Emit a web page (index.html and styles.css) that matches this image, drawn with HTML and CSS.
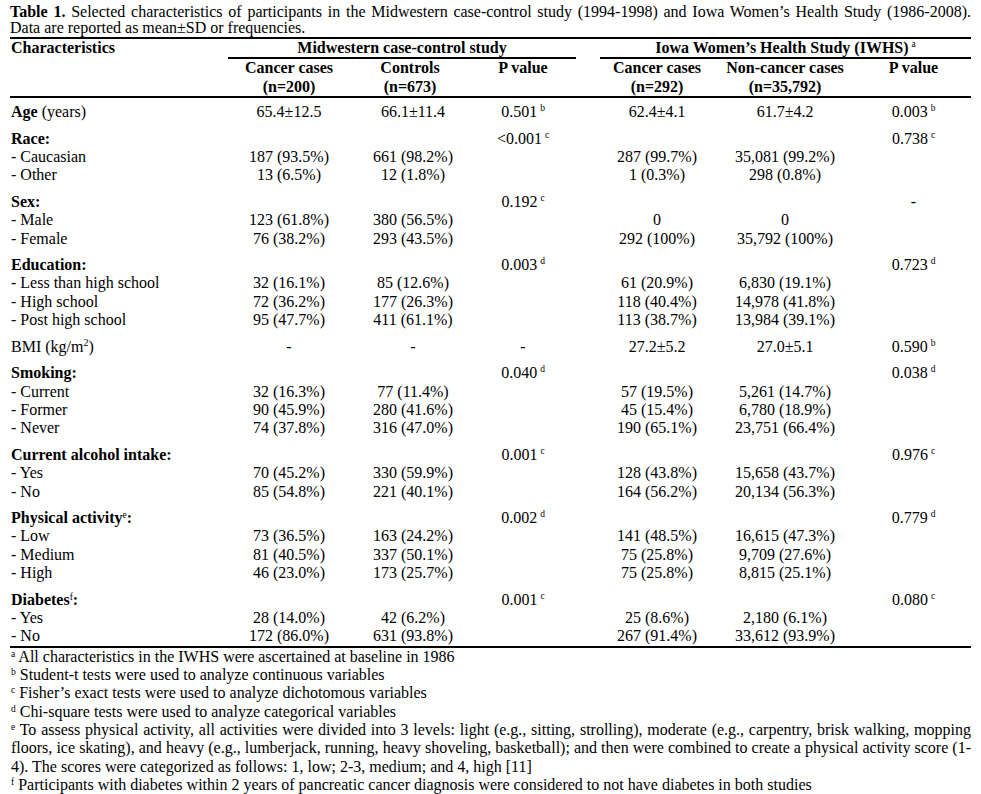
FILE: index.html
```html
<!DOCTYPE html>
<html>
<head>
<meta charset="utf-8">
<link rel="stylesheet" href="styles.css">
</head>
<body>
<div class="page">
  <p class="caption"><b>Table 1.</b> Selected characteristics of participants in the Midwestern case-control study (1994-1998) and Iowa Women’s Health Study (1986-2008). Data are reported as mean±SD or frequencies.</p>
  <table class="data">
    <colgroup>
      <col class="c-label"><col class="c-mw1"><col class="c-mw2"><col class="c-mw3"><col class="c-gap"><col class="c-iw1"><col class="c-iw2"><col class="c-iw3">
    </colgroup>
    <thead>
      <tr>
        <th class="lbl" rowspan="2">Characteristics</th>
        <th class="grp" colspan="3">Midwestern case-control study</th>
        <th></th>
        <th class="grp" colspan="3">Iowa Women’s Health Study (IWHS)<sup class="ref">a</sup></th>
      </tr>
      <tr>
        <th>Cancer cases<br>(n=200)</th>
        <th>Controls<br>(n=673)</th>
        <th class="pv">P value</th>
        <th></th>
        <th>Cancer cases<br>(n=292)</th>
        <th>Non-cancer cases<br>(n=35,792)</th>
        <th class="pv">P value</th>
      </tr>
    </thead>
    <tbody>
      <tr class="first"><td class="lbl"><b>Age</b> (years)</td><td>65.4±12.5</td><td class="r">66.1±11.4</td><td>0.501<sup class="ref">b</sup></td><td></td><td>62.4±4.1</td><td>61.7±4.2</td><td>0.003<sup class="ref">b</sup></td></tr>

      <tr class="gs"><td class="lbl"><b>Race:</b></td><td></td><td></td><td>&lt;0.001<sup class="ref">c</sup></td><td></td><td></td><td></td><td>0.738<sup class="ref">c</sup></td></tr>
      <tr><td class="lbl">- Caucasian</td><td>187 (93.5%)</td><td class="r">661 (98.2%)</td><td></td><td></td><td>287 (99.7%)</td><td>35,081 (99.2%)</td><td></td></tr>
      <tr><td class="lbl">- Other</td><td>13 (6.5%)</td><td class="r">12 (1.8%)</td><td></td><td></td><td>1 (0.3%)</td><td>298 (0.8%)</td><td></td></tr>

      <tr class="gs"><td class="lbl"><b>Sex:</b></td><td></td><td></td><td>0.192<sup class="ref">c</sup></td><td></td><td></td><td></td><td>-</td></tr>
      <tr><td class="lbl">- Male</td><td>123 (61.8%)</td><td class="r">380 (56.5%)</td><td></td><td></td><td>0</td><td>0</td><td></td></tr>
      <tr><td class="lbl">- Female</td><td>76 (38.2%)</td><td class="r">293 (43.5%)</td><td></td><td></td><td>292 (100%)</td><td>35,792 (100%)</td><td></td></tr>

      <tr class="gs"><td class="lbl"><b>Education:</b></td><td></td><td></td><td>0.003<sup class="ref">d</sup></td><td></td><td></td><td></td><td>0.723<sup class="ref">d</sup></td></tr>
      <tr><td class="lbl">- Less than high school</td><td>32 (16.1%)</td><td class="r">85 (12.6%)</td><td></td><td></td><td>61 (20.9%)</td><td>6,830 (19.1%)</td><td></td></tr>
      <tr><td class="lbl">- High school</td><td>72 (36.2%)</td><td class="r">177 (26.3%)</td><td></td><td></td><td>118 (40.4%)</td><td>14,978 (41.8%)</td><td></td></tr>
      <tr><td class="lbl">- Post high school</td><td>95 (47.7%)</td><td class="r">411 (61.1%)</td><td></td><td></td><td>113 (38.7%)</td><td>13,984 (39.1%)</td><td></td></tr>

      <tr class="gs"><td class="lbl">BMI (kg/m<sup class="pow">2</sup>)</td><td>-</td><td class="r">-</td><td>-</td><td></td><td>27.2±5.2</td><td>27.0±5.1</td><td>0.590<sup class="ref">b</sup></td></tr>

      <tr class="gs"><td class="lbl"><b>Smoking:</b></td><td></td><td></td><td>0.040<sup class="ref">d</sup></td><td></td><td></td><td></td><td>0.038<sup class="ref">d</sup></td></tr>
      <tr><td class="lbl">- Current</td><td>32 (16.3%)</td><td class="r">77 (11.4%)</td><td></td><td></td><td>57 (19.5%)</td><td>5,261 (14.7%)</td><td></td></tr>
      <tr><td class="lbl">- Former</td><td>90 (45.9%)</td><td class="r">280 (41.6%)</td><td></td><td></td><td>45 (15.4%)</td><td>6,780 (18.9%)</td><td></td></tr>
      <tr><td class="lbl">- Never</td><td>74 (37.8%)</td><td class="r">316 (47.0%)</td><td></td><td></td><td>190 (65.1%)</td><td>23,751 (66.4%)</td><td></td></tr>

      <tr class="gs"><td class="lbl"><b>Current alcohol intake:</b></td><td></td><td></td><td>0.001<sup class="ref">c</sup></td><td></td><td></td><td></td><td>0.976<sup class="ref">c</sup></td></tr>
      <tr><td class="lbl">- Yes</td><td>70 (45.2%)</td><td class="r">330 (59.9%)</td><td></td><td></td><td>128 (43.8%)</td><td>15,658 (43.7%)</td><td></td></tr>
      <tr><td class="lbl">- No</td><td>85 (54.8%)</td><td class="r">221 (40.1%)</td><td></td><td></td><td>164 (56.2%)</td><td>20,134 (56.3%)</td><td></td></tr>

      <tr class="gs"><td class="lbl"><b>Physical activity</b><sup class="fn">e</sup><b>:</b></td><td></td><td></td><td>0.002<sup class="ref">d</sup></td><td></td><td></td><td></td><td>0.779<sup class="ref">d</sup></td></tr>
      <tr><td class="lbl">- Low</td><td>73 (36.5%)</td><td class="r">163 (24.2%)</td><td></td><td></td><td>141 (48.5%)</td><td>16,615 (47.3%)</td><td></td></tr>
      <tr><td class="lbl">- Medium</td><td>81 (40.5%)</td><td class="r">337 (50.1%)</td><td></td><td></td><td>75 (25.8%)</td><td>9,709 (27.6%)</td><td></td></tr>
      <tr><td class="lbl">- High</td><td>46 (23.0%)</td><td class="r">173 (25.7%)</td><td></td><td></td><td>75 (25.8%)</td><td>8,815 (25.1%)</td><td></td></tr>

      <tr class="gs"><td class="lbl"><b>Diabetes</b><sup class="fn">f</sup><b>:</b></td><td></td><td></td><td>0.001<sup class="ref">c</sup></td><td></td><td></td><td></td><td>0.080<sup class="ref">c</sup></td></tr>
      <tr><td class="lbl">- Yes</td><td>28 (14.0%)</td><td class="r">42 (6.2%)</td><td></td><td></td><td>25 (8.6%)</td><td>2,180 (6.1%)</td><td></td></tr>
      <tr><td class="lbl">- No</td><td>172 (86.0%)</td><td class="r">631 (93.8%)</td><td></td><td></td><td>267 (91.4%)</td><td>33,612 (93.9%)</td><td></td></tr>
    </tbody>
  </table>
  <div class="notes">
    <p><sup class="fn">a</sup> All characteristics in the IWHS were ascertained at baseline in 1986</p>
    <p><sup class="fn">b</sup> Student-t tests were used to analyze continuous variables</p>
    <p><sup class="fn">c</sup> Fisher’s exact tests were used to analyze dichotomous variables</p>
    <p><sup class="fn">d</sup> Chi-square tests were used to analyze categorical variables</p>
    <p><sup class="fn">e</sup> To assess physical activity, all activities were divided into 3 levels: light (e.g., sitting, strolling), moderate (e.g., carpentry, brisk walking, mopping floors, ice skating), and heavy (e.g., lumberjack, running, heavy shoveling, basketball); and then were combined to create a physical activity score (1-4). The scores were categorized as follows: 1, low; 2-3, medium; and 4, high [11]</p>
    <p><sup class="fn">f</sup> Participants with diabetes within 2 years of pancreatic cancer diagnosis were considered to not have diabetes in both studies</p>
  </div>
</div>
</body>
</html>
```

FILE: styles.css
```css
html, body {
  margin: 0;
  padding: 0;
  background: #fff;
}

body {
  font-family: "Liberation Serif", "Times New Roman", serif;
  font-size: 16px;
  color: #000;
}

.page {
  width: 961px;
  padding: 4px 10px 0 10px;
}

.caption {
  margin: 0;
  line-height: 16px;
  text-align: justify;
  padding-bottom: 1px;
}

.data {
  width: 961px;
  table-layout: fixed;
  border-collapse: collapse;
  border-top: 2px solid #000;
  border-bottom: 2px solid #000;
  line-height: 18.4px;
}

.c-label { width: 218px; }
.c-mw1 { width: 122px; }
.c-mw2 { width: 120px; }
.c-mw3 { width: 106px; }
.c-gap { width: 24px; }
.c-iw1 { width: 114px; }
.c-iw2 { width: 142px; }
.c-iw3 { width: 115px; }

.data th,
.data td {
  padding: 0;
  text-align: center;
  vertical-align: top;
  white-space: nowrap;
}

.data th {
  font-weight: bold;
}

.data th.lbl,
.data td.lbl {
  text-align: left;
  padding-left: 1px;
}

.data th.grp {
  border-bottom: 2px solid #000;
}

.data thead {
  border-bottom: 2px solid #000;
}

.data td.r {
  padding-left: 6px;
}

.data tr.first td {
  padding-top: 5px;
}

.data tr.gs td {
  padding-top: 8px;
}

sup.ref {
  font-size: 9.5px;
  line-height: 0;
  vertical-align: 6px;
  margin-left: 3px;
  font-weight: normal;
}

sup.fn {
  font-size: 9.5px;
  line-height: 0;
  vertical-align: 5px;
  font-weight: normal;
}

sup.pow {
  font-size: 10px;
  line-height: 0;
  vertical-align: 6px;
}

.notes {
  line-height: 18.3px;
}

.notes p {
  margin: 0;
  padding-left: 1px;
  text-align: justify;
}
```
